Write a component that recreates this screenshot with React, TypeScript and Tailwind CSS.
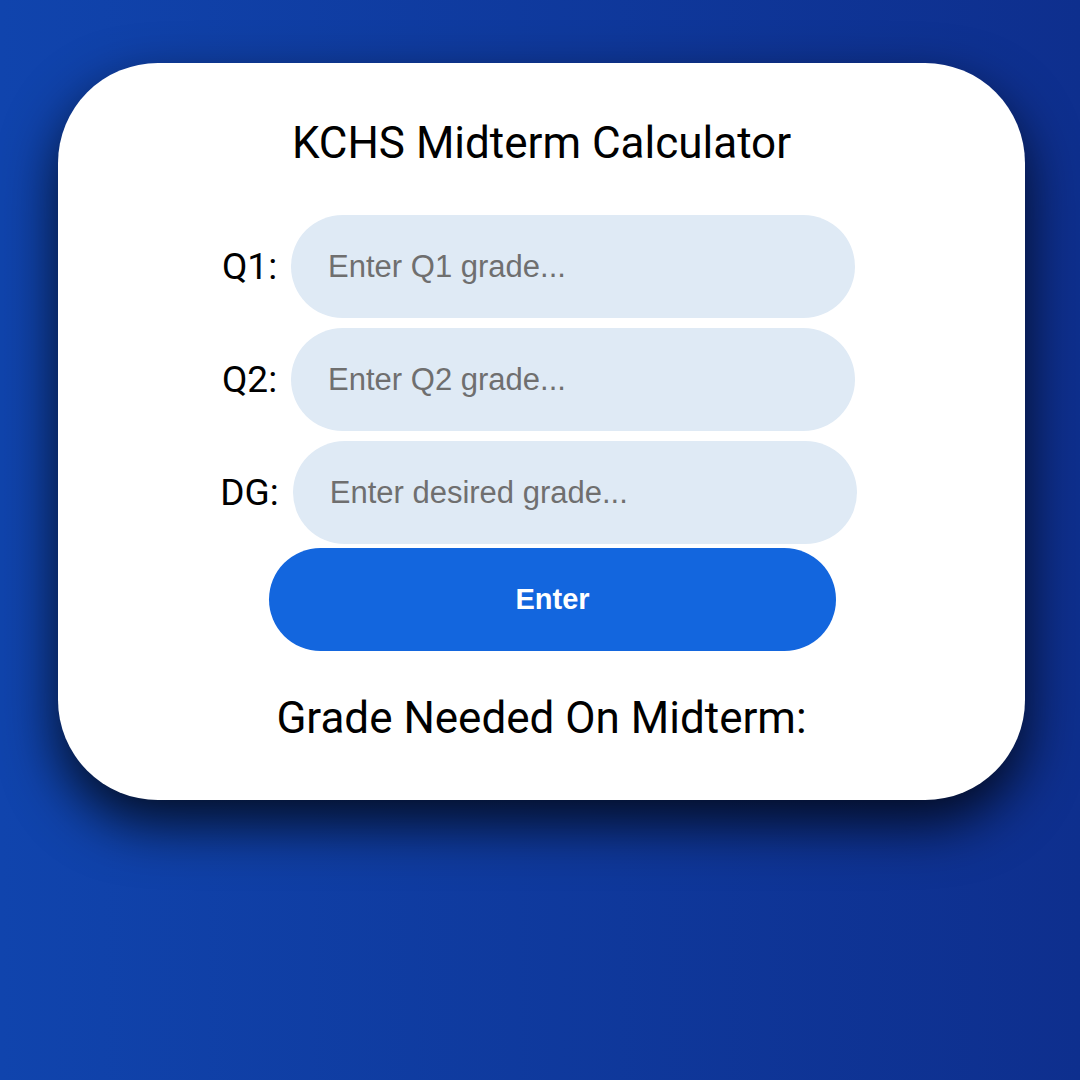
import React, { useState } from 'react';

const rows = [
  { id: 'q1', label: 'Q1:', placeholder: 'Enter Q1 grade...' },
  { id: 'q2', label: 'Q2:', placeholder: 'Enter Q2 grade...' },
  { id: 'dg', label: 'DG:', placeholder: 'Enter desired grade...' },
];

const App: React.FC = () => {
  const [values, setValues] = useState<Record<string, string>>({});

  return (
    <div className="w-[1080px] h-[1080px] overflow-hidden bg-gradient-to-r from-[#1044ad] to-[#0e2f8e] pt-[63px] pl-[58px]">
      {/* Card */}
      <div className="w-[967px] h-[737px] bg-white rounded-[100px] shadow-[0_24px_55px_rgba(0,0,0,0.78)] flex flex-col items-center pt-[54px] font-['Roboto',sans-serif] text-black">
        <h1 className="text-[44px] leading-[52px] font-normal">KCHS Midterm Calculator</h1>

        <div className="mt-[46px] flex flex-col gap-[10px] items-center">
          {rows.map((row) => (
            <div key={row.id} className="flex items-center gap-[14px] pr-[6px]">
              <label htmlFor={row.id} className="text-[37px] leading-[44px]">
                {row.label}
              </label>
              <input
                id={row.id}
                value={values[row.id] ?? ''}
                onChange={(e) => setValues({ ...values, [row.id]: e.target.value })}
                placeholder={row.placeholder}
                className="w-[564px] h-[103px] rounded-full bg-[#dfeaf5] px-[37px] text-[31px] font-['Liberation_Sans',Arial,sans-serif] placeholder:text-[#6f6f6f] outline-none"
              />
            </div>
          ))}
        </div>

        <button className="mt-[4px] ml-[22px] w-[567px] h-[103px] rounded-full bg-[#1366de] text-white text-[29px] font-semibold font-['Liberation_Sans',Arial,sans-serif]">
          Enter
        </button>

        <p className="mt-[41px] text-[44px] leading-[52px]">Grade Needed On Midterm:</p>
      </div>
    </div>
  );
};

export default App;
